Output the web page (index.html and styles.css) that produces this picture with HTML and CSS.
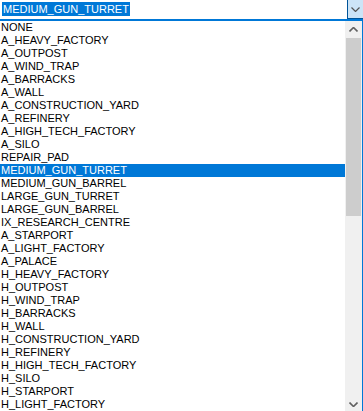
FILE: index.html
```html
<!DOCTYPE html>
<html lang="en">
<head>
    <meta charset="UTF-8">
    <title>Structure picker</title>
    <link rel="stylesheet" href="styles.css">
</head>
<body>
    <div class="combo">
        <div class="combo-value"><span class="combo-text">MEDIUM_GUN_TURRET</span></div>
        <div class="combo-button">
            <svg width="9" height="5" viewBox="0 0 9 5"><polyline points="0.5,0.5 4.5,4.5 8.5,0.5" fill="none" stroke="#555" stroke-width="1.2"/></svg>
        </div>
    </div>

    <div class="dropdown">
        <ul class="items">
            <li>NONE</li>
            <li>A_HEAVY_FACTORY</li>
            <li>A_OUTPOST</li>
            <li>A_WIND_TRAP</li>
            <li>A_BARRACKS</li>
            <li>A_WALL</li>
            <li>A_CONSTRUCTION_YARD</li>
            <li>A_REFINERY</li>
            <li>A_HIGH_TECH_FACTORY</li>
            <li>A_SILO</li>
            <li>REPAIR_PAD</li>
            <li class="selected">MEDIUM_GUN_TURRET</li>
            <li>MEDIUM_GUN_BARREL</li>
            <li>LARGE_GUN_TURRET</li>
            <li>LARGE_GUN_BARREL</li>
            <li>IX_RESEARCH_CENTRE</li>
            <li>A_STARPORT</li>
            <li>A_LIGHT_FACTORY</li>
            <li>A_PALACE</li>
            <li>H_HEAVY_FACTORY</li>
            <li>H_OUTPOST</li>
            <li>H_WIND_TRAP</li>
            <li>H_BARRACKS</li>
            <li>H_WALL</li>
            <li>H_CONSTRUCTION_YARD</li>
            <li>H_REFINERY</li>
            <li>H_HIGH_TECH_FACTORY</li>
            <li>H_SILO</li>
            <li>H_STARPORT</li>
            <li>H_LIGHT_FACTORY</li>
        </ul>

        <div class="scrollbar">
            <div class="scroll-btn">
                <svg width="9" height="5" viewBox="0 0 9 5"><polyline points="0.5,4.5 4.5,0.5 8.5,4.5" fill="none" stroke="#606060" stroke-width="1.6"/></svg>
            </div>
            <div class="scroll-track">
                <div class="scroll-thumb"></div>
            </div>
            <div class="scroll-btn">
                <svg width="9" height="5" viewBox="0 0 9 5"><polyline points="0.5,0.5 4.5,4.5 8.5,0.5" fill="none" stroke="#606060" stroke-width="1.6"/></svg>
            </div>
        </div>
    </div>
</body>
</html>
```

FILE: styles.css
```css
body {
    margin: 0;
    width: 363px;
    height: 411px;
    overflow: hidden;
    background: #fff;
    font-family: "Liberation Sans", Arial, sans-serif;
    font-size: 11px;
    color: #000;
}

.combo {
    display: flex;
    height: 19px;
    background: #fff;
}

.combo-value {
    flex: 1;
    padding: 2px 0 0 2px;
}

.combo-text {
    display: inline-block;
    height: 14px;
    line-height: 14px;
    padding: 0 1px;
    background-color: #0078d7;
    color: #fff;
}

.combo-button {
    width: 16px;
    display: flex;
    align-items: center;
    justify-content: center;
    background-color: #cce4f7;
    border-left: 1px solid #005499;
    border-bottom: 1px solid #005499;
    box-sizing: border-box;
}

.dropdown {
    display: flex;
    height: 392px;
    border-top: 2px solid #0078d7;
    border-right: 1px solid #0078d7;
}

.items {
    flex: 1;
    list-style: none;
    margin: 0;
    padding: 0;
}

.items li {
    height: 13px;
    line-height: 13px;
    padding-left: 1px;
    white-space: nowrap;
}

.items li.selected {
    background-color: #0078d7;
    color: #fff;
}

.scrollbar {
    width: 17px;
    display: flex;
    flex-direction: column;
    background-color: #f0f0f0;
}

.scroll-btn {
    height: 17px;
    display: flex;
    align-items: center;
    justify-content: center;
}

.scroll-track {
    flex: 1;
}

.scroll-thumb {
    height: 178px;
    margin: 0 1px;
    background-color: #cdcdcd;
}
```
